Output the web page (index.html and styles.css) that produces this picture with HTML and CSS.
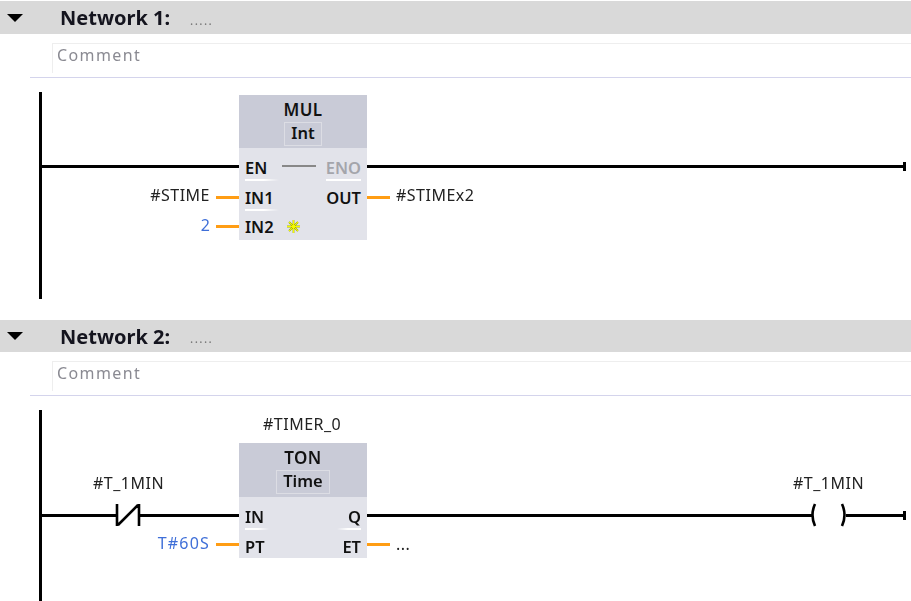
FILE: index.html
```html
<!DOCTYPE html>
<html>
	<head>
		<meta charset="utf-8">
		<title>Networks</title>
		<link rel="stylesheet" href="styles.css">
	</head>
	<body>
		<section class="network">
			<div class="net-head">
				<span class="arrow"></span>
				<span class="net-title">Network 1:</span>
				<span class="net-dots">.....</span>
			</div>
			<div class="comment">Comment</div>
			<div class="canvas canvas-1">
				<div class="rail rail-1"></div>
				<!-- wires -->
				<div class="wire" style="left:40px;top:87px;width:199px"></div>
				<div class="wire" style="left:367px;top:87px;width:538px"></div>
				<div class="tick" style="left:903px;top:84px"></div>
				<div class="wire-o" style="left:216px;top:118px"></div>
				<div class="wire-o" style="left:216px;top:147px"></div>
				<div class="wire-o" style="left:367px;top:118px"></div>
				<span class="label" style="right:701px;top:107px">#STIME</span>
				<span class="label blue" style="right:700px;top:137px">2</span>
				<span class="label" style="left:396px;top:107px">#STIMEx2</span>
				<!-- MUL box -->
				<div class="block block-mul">
					<div class="block-head">
						<div class="block-name">MUL</div>
						<div class="block-type">Int</div>
					</div>
					<div class="pins">
						<div class="pin-row">
							<span class="pin sep">EN</span>
							<span class="en-line"></span>
							<span class="pin sep grey">ENO</span>
						</div>
						<div class="pin-row">
							<span class="pin sep">IN1</span>
							<span class="pin">OUT</span>
						</div>
						<div class="pin-row pin-row-left">
							<span class="pin">IN2</span>
							<svg class="star" width="15" height="15" viewBox="0 0 15 15">
								<path d="M7.5 1v13M1 7.5h13M3 3l9 9M12 3l-9 9" stroke="#a8b400" stroke-width="1.8" fill="none"/>
								<path d="M7.5 1v13M1 7.5h13M3 3l9 9M12 3l-9 9" stroke="#f4fa00" stroke-width="1" fill="none"/>
							</svg>
						</div>
					</div>
				</div>
			</div>
		</section>

		<section class="network">
			<div class="net-head net-head-2">
				<span class="arrow"></span>
				<span class="net-title">Network 2:</span>
				<span class="net-dots">.....</span>
			</div>
			<div class="comment">Comment</div>
			<div class="canvas canvas-2">
				<div class="rail rail-2"></div>
				<span class="label" style="left:263px;top:18px">#TIMER_0</span>
				<span class="label" style="left:93px;top:77px">#T_1MIN</span>
				<span class="label" style="left:793px;top:77px">#T_1MIN</span>
				<!-- wires -->
				<div class="wire" style="left:40px;top:118px;width:77px"></div>
				<svg class="contact" width="26" height="24" viewBox="0 0 26 24">
					<path d="M2 1v22M24 1v22M3 22L23 2" stroke="#000" stroke-width="2.6" fill="none"/>
				</svg>
				<div class="wire" style="left:140px;top:118px;width:99px"></div>
				<div class="wire" style="left:367px;top:118px;width:446px"></div>
				<svg class="coil" width="40" height="24" viewBox="0 0 40 24">
					<path d="M6 1Q1 12 6 23M33 1Q38 12 33 23" stroke="#000" stroke-width="2.6" fill="none"/>
				</svg>
				<div class="wire" style="left:846px;top:118px;width:59px"></div>
				<div class="tick" style="left:903px;top:115px"></div>
				<div class="wire-o" style="left:216px;top:147px"></div>
				<div class="wire-o" style="left:367px;top:147px"></div>
				<span class="label blue" style="right:701px;top:137px">T#60S</span>
				<span class="label" style="left:396px;top:138px">...</span>
				<!-- TON box -->
				<div class="block block-ton">
					<div class="block-head">
						<div class="block-name">TON</div>
						<div class="block-type">Time</div>
					</div>
					<div class="pins">
						<div class="pin-row">
							<span class="pin sep short">IN</span>
							<span class="pin sep short">Q</span>
						</div>
						<div class="pin-row">
							<span class="pin">PT</span>
							<span class="pin">ET</span>
						</div>
					</div>
				</div>
			</div>
		</section>
	</body>
</html>
```

FILE: styles.css
```css
html,body{margin: 0; padding: 0;}
body{
	width: 911px;
	height: 601px;
	overflow: hidden;
	background: #fff;
	padding-top: 1px;
	box-sizing: border-box;
	font-family: "Noto Sans", "Open Sans", sans-serif;
	color: #111;
	filter: blur(0.35px);
}
.network{
	display: flex;
	flex-direction: column;
}
.net-head{
	display: flex;
	align-items: center;
	height: 33px;
	background: #d9d9d9;
}
.net-head-2{height: 32px;}
.arrow{
	width: 0;
	height: 0;
	margin-left: 7px;
	border-left: 8px solid transparent;
	border-right: 8px solid transparent;
	border-top: 8px solid #000;
}
.net-title{
	margin-left: 37px;
	font-size: 20px;
	font-weight: 700;
	color: #14141e;
}
.net-dots{
	margin: 5px 0 0 20px;
	font-size: 12px;
	letter-spacing: 1.4px;
	color: #777;
}
.comment{
	height: 30px;
	line-height: 22px;
	margin: 9px 0 4px 52px;
	padding-left: 4px;
	border-top: 1px solid #eee;
	border-left: 1px solid #eee;
	font-size: 16px;
	letter-spacing: 1.4px;
	color: #8a8a92;
	box-sizing: border-box;
}
.canvas{
	position: relative;
	border-top: 1px solid #d4d4ec;
	margin-left: 30px;
}
.canvas-1{height: 242px;}
.canvas-2{height: 205px;}
.canvas > *{margin-left: -30px;}
.rail{
	position: absolute;
	left: 39px;
	top: 14px;
	width: 3px;
	background: #000;
}
.rail-1{height: 207px;}
.rail-2{height: 195px;}
.wire{
	position: absolute;
	height: 3px;
	background: #000;
}
.wire-o{
	position: absolute;
	width: 23px;
	height: 3px;
	background: #ff9d14;
}
.tick{
	position: absolute;
	width: 3px;
	height: 9px;
	background: #000;
}
.label{
	position: absolute;
	font-size: 16px;
	line-height: 20px;
	letter-spacing: 0.5px;
	white-space: nowrap;
	color: #222;
}
.blue{
	color: #3f6fd8;
	letter-spacing: 1.2px;
}
.contact{
	position: absolute;
	left: 115px;
	top: 107px;
}
.coil{
	position: absolute;
	left: 809px;
	top: 107px;
}
.block{
	position: absolute;
	left: 239px;
	width: 128px;
	background: #e2e3ea;
}
.block-mul{top: 17px; height: 145px;}
.block-ton{top: 47px; height: 115px;}
.block-head{
	display: flex;
	flex-direction: column;
	align-items: center;
	height: 53px;
	padding-top: 4px;
	background: #c9cbd7;
	box-sizing: border-box;
}
.block-ton .block-head{height: 54px;}
.block-name{
	font-size: 17px;
	font-weight: 600;
	line-height: 21px;
	letter-spacing: 0.4px;
}
.block-type{
	height: 24px;
	margin-top: 2px;
	line-height: 20px;
	padding: 0 6px;
	font-size: 16.5px;
	font-weight: 600;
	border: 1px solid #dcdde4;
	box-sizing: border-box;
}
.pins{
	display: flex;
	flex-direction: column;
	padding: 5px 6px 0;
}
.pin-row{
	display: flex;
	justify-content: space-between;
	align-items: center;
	height: 29.5px;
}
.pin-row-left{justify-content: flex-start;}
.pin{
	font-size: 16.5px;
	font-weight: 600;
	line-height: 27px;
}
.sep{
	min-width: 34px;
	background: linear-gradient(to right, #fff, #fff 55%, transparent) bottom / 100% 2px no-repeat;
}
.short{min-width: 24px;}
.pin-row .sep:last-child{
	text-align: right;
	background-image: linear-gradient(to left, #fff, #fff 55%, transparent);
}
.grey{color: #a4a5ab;}
.pin-row .grey:last-child{background-image: linear-gradient(#fff, #fff);}
.en-line{
	width: 34px;
	height: 2px;
	margin: 0 6px 3px 0;
	background: #888;
}
.star{margin-left: 12px;}
```
